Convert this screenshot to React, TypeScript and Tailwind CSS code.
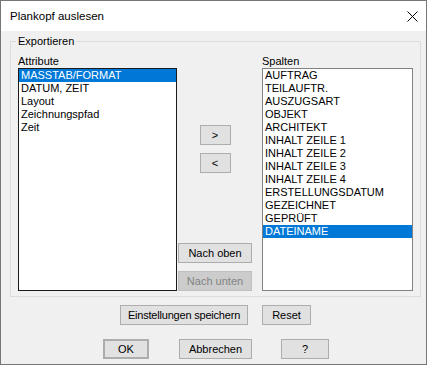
import React from "react";

const left = ["MASSTAB/FORMAT", "DATUM, ZEIT", "Layout", "Zeichnungspfad", "Zeit"];
const right = [
  "AUFTRAG",
  "TEILAUFTR.",
  "AUSZUGSART",
  "OBJEKT",
  "ARCHITEKT",
  "INHALT ZEILE 1",
  "INHALT ZEILE 2",
  "INHALT ZEILE 3",
  "INHALT ZEILE 4",
  "ERSTELLUNGSDATUM",
  "GEZEICHNET",
  "GEPRÜFT",
  "DATEINAME",
];

function Btn({ children, className = "" }: { children: React.ReactNode; className?: string }) {
  return (
    <div
      className={
        "h-[20px] flex items-center justify-center border border-[#adadad] bg-[#e1e1e1] text-[11px] leading-[13px] text-black " +
        className
      }
    >
      {children}
    </div>
  );
}

function List({ items, sel, className = "" }: { items: string[]; sel: number; className?: string }) {
  return (
    <div className={"h-[223px] bg-white border " + className}>
      {items.map((t, i) => (
        <div
          key={t}
          className={
            "h-[13px] pl-[2px] text-[11px] leading-[13px] whitespace-nowrap " +
            (i === sel ? "bg-[#0078d7] text-white" : "text-black")
          }
        >
          {t}
        </div>
      ))}
    </div>
  );
}

export default function App() {
  return (
    <div
      className="w-[428px] h-[367px] bg-white"
      style={{ fontFamily: '"Liberation Sans", Arial, sans-serif' }}
    >
      <div className="w-[427px] h-[365px] border border-[#767676] flex flex-col bg-[#f0f0f0]">
        <div className="h-[30px] bg-white flex items-center justify-between pl-[9px] pr-[8px]">
          <span className="text-[11.5px] leading-[14px] text-black">Plankopf auslesen</span>
          <svg width="11" height="11" viewBox="0 0 11 11" className="mt-[1px]">
            <path d="M0.5 0.5 L10.5 10.5 M10.5 0.5 L0.5 10.5" stroke="#000" strokeWidth="1" />
          </svg>
        </div>

        <div className="relative ml-[9px] mt-[10px] w-[411px] h-[256px] border border-[#dcdcdc]">
          <span className="absolute left-[5px] -top-[7px] bg-[#f0f0f0] px-[2px] text-[11px] leading-[13px] text-black">
            Exportieren
          </span>
          <div className="flex pl-[7px] pt-[13px]">
            <div className="w-[159px] flex flex-col">
              <div className="h-[13px] text-[11px] leading-[13px] text-black">Attribute</div>
              <List items={left} sel={0} className="border-[#1a1a1a]" />
            </div>
            <div className="ml-[1px] w-[74px] flex flex-col items-center">
              <Btn className="w-[31px] mt-[70px]">&gt;</Btn>
              <Btn className="w-[31px] mt-[8px]">&lt;</Btn>
              <Btn className="w-[74px] mt-[70px]">Nach oben</Btn>
              <div className="w-[74px] mt-[8px] h-[20px] flex items-center justify-center border border-[#bfbfbf] bg-[#cccccc] text-[11px] leading-[13px] text-[#838383]">
                Nach unten
              </div>
            </div>
            <div className="ml-[10px] w-[151px] flex flex-col">
              <div className="h-[13px] text-[11px] leading-[13px] text-black">Spalten</div>
              <List items={right} sel={12} className="border-[#828282]" />
            </div>
          </div>
        </div>

        <div className="flex mt-[8px]">
          <Btn className="ml-[119px] w-[128px] tracking-[-0.2px]">Einstellungen speichern</Btn>
          <Btn className="ml-[14px] w-[49px]">Reset</Btn>
        </div>
        <div className="flex mt-[14px]">
          <Btn className="ml-[102px] w-[46px] border-2 border-[#0078d7]">OK</Btn>
          <Btn className="ml-[30px] w-[73px]">Abbrechen</Btn>
          <Btn className="ml-[29px] w-[48px]">?</Btn>
        </div>
      </div>
    </div>
  );
}
